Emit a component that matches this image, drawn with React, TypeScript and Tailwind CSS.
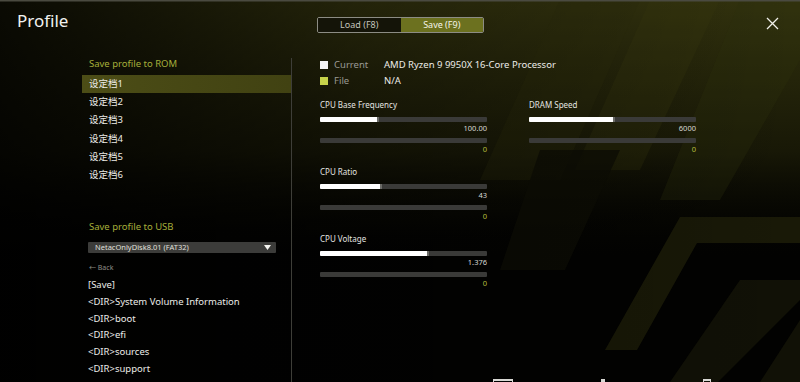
import React from "react";

const FONT = { fontFamily: '"Noto Sans", "Noto Sans CJK SC", sans-serif' };

const romSlots = ["设定档1", "设定档2", "设定档3", "设定档4", "设定档5", "设定档6"];
const usbFiles = [
  "[Save]",
  "<DIR>System Volume Information",
  "<DIR>boot",
  "<DIR>efi",
  "<DIR>sources",
  "<DIR>support",
  "<DIR>tools",
];

type Setting = { label: string; value: string; pct: number };

const leftSettings: Setting[] = [
  { label: "CPU Base Frequency", value: "100.00", pct: 34 },
  { label: "CPU Ratio", value: "43", pct: 36 },
  { label: "CPU Voltage", value: "1.376", pct: 64 },
];
const rightSettings: Setting[] = [{ label: "DRAM Speed", value: "6000", pct: 50 }];

const Backdrop = () => (
  <svg className="absolute inset-0" width="800" height="382" viewBox="0 0 800 382">
    <defs>
      <linearGradient id="topGlow" x1="0" y1="0" x2="0" y2="1">
        <stop offset="0" stopColor="#33330e" stopOpacity="1" />
        <stop offset="0.4" stopColor="#1a1a07" stopOpacity="0.9" />
        <stop offset="0.7" stopColor="#000000" stopOpacity="0" />
      </linearGradient>
      <linearGradient id="sideFade" x1="0" y1="0" x2="1" y2="0">
        <stop offset="0" stopColor="#000" stopOpacity="0.8" />
        <stop offset="0.45" stopColor="#000" stopOpacity="0.3" />
        <stop offset="1" stopColor="#000" stopOpacity="0" />
      </linearGradient>
    </defs>
    <rect width="800" height="382" fill="#020201" />
    <rect width="800" height="382" fill="url(#topGlow)" />
    <polygon points="560,0 640,0 560,180 480,180" fill="#2d2e0c" opacity="0.3" />
    <polygon points="650,0 720,0 640,170 575,170" fill="#3b3c10" opacity="0.25" />
    <polygon points="740,0 800,0 800,60 720,200 660,200" fill="#30310d" opacity="0.3" />
    <polygon points="680,217 800,217 800,243 697,243 637,350 605,350" fill="#191907" />
    <polygon points="740,280 800,280 800,300 718,382 670,382" fill="#111106" />
    <polygon points="800,320 800,382 760,382" fill="#111106" />
    <polygon points="540,150 620,150 565,270 500,270" fill="#0e0e05" opacity="0.8" />
    <rect width="800" height="382" fill="url(#sideFade)" />
    <rect width="800" height="1.5" fill="#4a4a40" />
  </svg>
);

const Bar = ({ pct }: { pct: number }) => (
  <div className="h-[5px] w-full bg-[#3a3a38] rounded-[1px] overflow-hidden flex">
    <div className="h-full bg-white" style={{ width: `${pct}%` }} />
    <div className="h-full w-[2px] bg-[#6a6a66]" />
  </div>
);

const SettingBlock = ({ s }: { s: Setting }) => (
  <div className="flex flex-col w-[167px] mb-[12px]">
    <div className="h-[10px] leading-[10px] text-[8px] text-[#e4e4e0]">{s.label}</div>
    <div className="mt-[7px]">
      <Bar pct={s.pct} />
    </div>
    <div className="h-[11px] leading-[11px] text-[7.5px] text-right text-[#d8d8d4] mt-[1px]">{s.value}</div>
    <div className="mt-[4px] h-[5px] w-full bg-[#3a3a38] rounded-[1px]" />
    <div className="h-[11px] leading-[11px] text-[7.5px] text-right text-[#b7bf3c] mt-[1px]">0</div>
  </div>
);

export default function App() {
  return (
    <div className="relative w-[800px] h-[382px] overflow-hidden bg-black text-white" style={FONT}>
      <Backdrop />

      <div className="relative flex flex-col h-full">
        {/* header */}
        <div className="flex items-start h-[52px]">
          <div className="pl-[17px] pt-[10px] text-[17px] leading-[22px] text-[#f2f2f0] w-[300px]">Profile</div>
          <div className="ml-[17px] mt-[17px] flex w-[167px] h-[16px] border border-[#8c8c84] rounded-[2px] overflow-hidden text-[9px]">
            <div className="flex-1 flex items-center justify-center text-[#c4c4bc] bg-[#141408]">Load (F8)</div>
            <div className="flex-1 flex items-center justify-center text-[#f4f4e8] bg-[#6c711f]">Save (F9)</div>
          </div>
          <div className="ml-auto mr-[21px] mt-[17px] w-[13px] h-[13px]">
            <svg viewBox="0 0 13 13" width="13" height="13">
              <path d="M1 1 L12 12 M12 1 L1 12" stroke="#f0f0ea" strokeWidth="1.3" />
            </svg>
          </div>
        </div>

        <div className="flex flex-1 min-h-0">
          {/* left column */}
          <div className="ml-[82px] w-[209px] flex flex-col">
            <div className="pl-[7px] h-[22px] leading-[22px] text-[9.5px] text-[#a6af3a] mt-[1px]">Save profile to ROM</div>
            <div className="flex flex-col">
              {romSlots.map((name, i) => (
                <div
                  key={name}
                  className={`pl-[7px] h-[18.2px] flex items-center text-[9.5px] text-[#ecece8] ${
                    i === 0 ? "bg-gradient-to-r from-[#4c4d16] to-[#414212]" : ""
                  }`}
                >
                  {name}
                </div>
              ))}
            </div>

            <div className="pl-[7px] mt-[35px] h-[16px] leading-[16px] text-[9.5px] text-[#a6af3a]">Save profile to USB</div>
            <div className="ml-[6px] mt-[7px] w-[188px] h-[16px] bg-[#3c3c3a] flex items-center pl-[7px] pr-[5px] text-[7.5px] text-[#e0e0dc] rounded-[1px]">
              <span>NetacOnlyDisk8.01 (FAT32)</span>
              <svg className="ml-auto" width="7" height="5" viewBox="0 0 7 5">
                <polygon points="0,0 7,0 3.5,5" fill="#f4f4f0" />
              </svg>
            </div>
            <div className="pl-[7px] mt-[9px] h-[12px] leading-[12px] text-[7px] text-[#8c8c86]">← Back</div>
            <div className="flex flex-col mt-[3px]">
              {usbFiles.map((f) => (
                <div key={f} className="pl-[6px] h-[16.7px] leading-[16.7px] text-[9.5px] text-[#ecece8] whitespace-nowrap">
                  {f}
                </div>
              ))}
            </div>
          </div>

          {/* divider */}
          <div className="w-[1px] bg-[#3e3e38] mt-[6px]" />

          {/* right column */}
          <div className="ml-[28px] flex flex-col">
            <div className="flex flex-col text-[9.5px] mt-[5px]">
              <div className="flex items-center h-[16px]">
                <div className="w-[8px] h-[8px] bg-[#f4f4f4]" />
                <span className="ml-[6px] w-[50px] text-[#9a9a94]">Current</span>
                <span className="text-[#ecece8]">AMD Ryzen 9 9950X 16-Core Processor</span>
              </div>
              <div className="flex items-center h-[16px]">
                <div className="w-[8px] h-[8px] bg-[#c6d24a]" />
                <span className="ml-[6px] w-[50px] text-[#9a9a94]">File</span>
                <span className="text-[#ecece8]">N/A</span>
              </div>
            </div>

            <div className="flex gap-[42px] mt-[11px]">
              <div className="flex flex-col">
                {leftSettings.map((s) => (
                  <SettingBlock key={s.label} s={s} />
                ))}
              </div>
              <div className="flex flex-col">
                {rightSettings.map((s) => (
                  <SettingBlock key={s.label} s={s} />
                ))}
              </div>
            </div>
          </div>
        </div>
      </div>

      {/* bottom key hints, mostly cut off */}
      <div className="absolute left-[493px] top-[379px] w-[20px] h-[4px] border-t-2 border-x border-[#d8d8d4]" />
      <div className="absolute left-[601px] top-[379px] w-[4px] h-[4px] bg-[#d8d8d4]" />
      <div className="absolute left-[703px] top-[379px] w-[8px] h-[4px] border-t-2 border-x border-[#d8d8d4]" />
    </div>
  );
}
